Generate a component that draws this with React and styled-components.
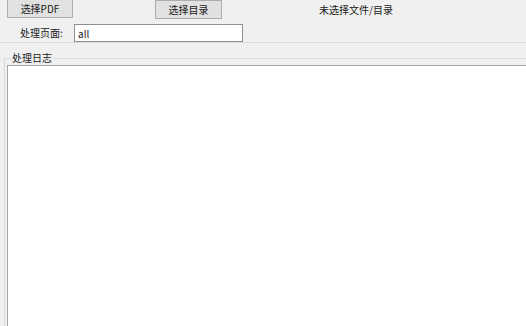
import React from 'react'
import styled, { createGlobalStyle } from 'styled-components'

const Global = createGlobalStyle`
  html, body {
    margin: 0;
    padding: 0;
    background: #f0f0f0;
    overflow: hidden;
  }
  * { box-sizing: border-box; }
`

function App() {
  return (
    <Window>
      <Global />
      <TopRow>
        <PushButton $left={7} $width={66} $top={-1}>选择PDF</PushButton>
        <PushButton $left={82} $width={67} $top={0}>选择目录</PushButton>
        <Status>未选择文件/目录</Status>
      </TopRow>

      <PageRow>
        <FieldLabel>处理页面:</FieldLabel>
        <PageInput defaultValue="all" />
      </PageRow>

      <LogGroup>
        <GroupTitle>处理日志</GroupTitle>
        <LogArea readOnly />
      </LogGroup>
    </Window>
  )
}

export default App

const Window = styled.div`
  width: 526px;
  height: 326px;
  display: flex;
  flex-direction: column;
  font-family: "Noto Sans CJK SC", "Noto Sans", sans-serif;
  font-size: 10px;
  color: #1a1a1a;
  background: #f0f0f0;
`

const TopRow = styled.div`
  height: 24px;
  display: flex;
  align-items: flex-start;
`

const PushButton = styled.button`
  margin-left: ${p => p.$left}px;
  margin-top: ${p => p.$top}px;
  width: ${p => p.$width}px;
  height: 19px;
  padding: 0;
  background: #e1e1e1;
  border: 1px solid #adadad;
  font: inherit;
  color: #1a1a1a;
  display: flex;
  align-items: center;
  justify-content: center;
`

const Status = styled.div`
  margin-left: 97px;
  height: 19px;
  line-height: 19px;
`

const PageRow = styled.div`
  height: 19px;
  display: flex;
  align-items: flex-start;
  border-bottom: 1px solid #dadada;
`

const FieldLabel = styled.div`
  margin-left: 20px;
  width: 54px;
  line-height: 18px;
`

const PageInput = styled.input`
  width: 169px;
  height: 18px;
  border: 1px solid #8f8f8f;
  background: #fff;
  padding: 0 0 0 3px;
  font: inherit;
  color: #1a1a1a;
  outline: none;
`

const LogGroup = styled.fieldset`
  flex: 1;
  margin: 9px -20px 0 4px;
  padding: 0 0 0 2px;
  border: 1px solid #dadada;
  border-bottom: none;
  display: flex;
  flex-direction: column;
  min-width: 0;
`

const GroupTitle = styled.legend`
  margin-left: 4px;
  padding: 0 1px;
  line-height: 12px;
`

const LogArea = styled.textarea`
  flex: 1;
  margin-top: 1px;
  border: 1px solid #a8a8a8;
  border-right: none;
  border-bottom: none;
  background: #fff;
  resize: none;
  outline: none;
`
